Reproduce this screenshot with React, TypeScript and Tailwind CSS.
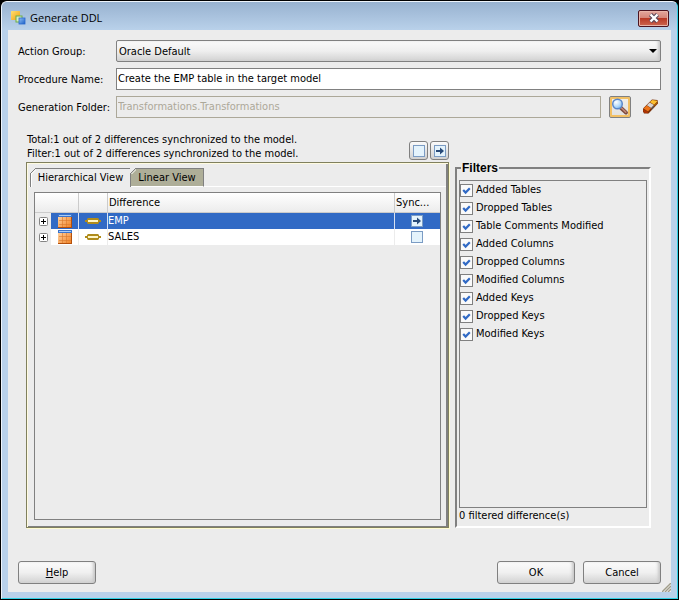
import { useState } from 'react';
import type { ReactNode } from 'react';

const FILTERS = [
  'Added Tables',
  'Dropped Tables',
  'Table Comments Modified',
  'Added Columns',
  'Dropped Columns',
  'Modified Columns',
  'Added Keys',
  'Dropped Keys',
  'Modified Keys',
];

type Difference = {
  name: string;
  synced: boolean;
};

const DIFFERENCES: Difference[] = [
  { name: 'EMP', synced: true },
  { name: 'SALES', synced: false },
];

function AppIcon() {
  return (
    <svg width="16" height="16" viewBox="0 0 16 16" aria-hidden="true">
      <defs>
        <linearGradient id="app-y" x1="0" y1="0" x2="1" y2="1">
          <stop offset="0" stopColor="#ffdf70" />
          <stop offset="1" stopColor="#f0a010" />
        </linearGradient>
        <linearGradient id="app-b" x1="0" y1="0" x2="1" y2="1">
          <stop offset="0" stopColor="#8fc0f8" />
          <stop offset="1" stopColor="#1c5fc4" />
        </linearGradient>
      </defs>
      <rect x="1" y="1" width="9" height="9" rx="0.5" fill="url(#app-y)" />
      <rect x="6" y="6" width="6" height="6" fill="#d8ecc0" stroke="#6cae48" />
      <rect x="9" y="8" width="6" height="6" fill="url(#app-b)" stroke="#2a6ad0" strokeWidth="0.8" />
    </svg>
  );
}

function SearchIcon() {
  return (
    <svg width="18" height="18" viewBox="0 0 18 18" aria-hidden="true">
      <defs>
        <radialGradient id="lens" cx="0.35" cy="0.3" r="0.8">
          <stop offset="0" stopColor="#ffffff" />
          <stop offset="0.5" stopColor="#bfe0fb" />
          <stop offset="1" stopColor="#6fb2ee" />
        </radialGradient>
      </defs>
      <path d="M10 10l5 4.6" stroke="#7c4a3c" strokeWidth="3.8" strokeLinecap="round" />
      <path d="M10.5 10l4.3 4.1" stroke="#c08878" strokeWidth="1.6" strokeLinecap="round" />
      <circle cx="6.5" cy="6" r="4.8" fill="url(#lens)" stroke="#5a86c8" strokeWidth="1.4" />
    </svg>
  );
}

function EraserIcon() {
  return (
    <svg width="18" height="18" viewBox="0 0 18 18" aria-hidden="true">
      <path d="M1 10.5L10 1.5L15.5 2L16 5.5L6.5 15.5L2 15.5L1 13.5Z" fill="#7a3008" />
      <path d="M1.6 10.6L4.6 7.5L9 10.2L6 13.4Z" fill="#ee7418" />
      <path d="M1.4 11.2L5.8 13.8L6 15.2L2.2 14.8L1.4 13.2Z" fill="#b03404" />
      <path d="M4.9 7.2L7.6 4.4L12 7L9.2 10Z" fill="#d8d4d0" />
      <path d="M9.2 10.2L12 7.2L12.2 9L9.4 12Z" fill="#5e5854" />
      <path d="M7.9 4.1L10.4 1.9L15 2.8L15.2 3.6L12.2 6.8Z" fill="#fcc030" />
      <path d="M12.3 7L15.3 3.8L15.4 5.5L12.4 8.7Z" fill="#a8600c" />
    </svg>
  );
}

function TableIcon() {
  return (
    <svg width="14" height="14" viewBox="0 0 14 14" aria-hidden="true" className="mx-auto block">
      <defs>
        <linearGradient id="cells" x1="0" y1="0" x2="1" y2="1">
          <stop offset="0" stopColor="#ffdcb0" />
          <stop offset="1" stopColor="#f07c1c" />
        </linearGradient>
      </defs>
      <rect width="14" height="14" fill="url(#cells)" />
      <rect width="14" height="3" fill="#3b74cc" />
      <path d="M1 1.5h12" stroke="#a8ccf6" />
      <path d="M4.5 3v10M8.5 3v10M1 6.5h12M1 10.5h12" stroke="#d8782c" strokeOpacity="0.6" />
      <path d="M0 13.5h14M13.5 3v11" stroke="#b4500c" />
    </svg>
  );
}

function ColumnIcon() {
  return (
    <svg width="16" height="6" viewBox="0 0 16 6" aria-hidden="true" className="mx-auto block">
      <path d="M0 3h16" stroke="#b08c1c" strokeWidth="2" />
      <path d="M3 0H13L14 1V5L13 6H3L2 5V1Z" fill="#b08c1c" />
      <path d="M3 2h10v2H3Z" fill="#fff6c8" />
    </svg>
  );
}

// Small blue-framed square, with an arrow in it when the row is synchronized
function SyncMark({ arrow }: { arrow: boolean }) {
  return (
    <svg width="12" height="12" viewBox="0 0 12 12" aria-hidden="true" className="mx-auto block">
      <rect x="0.5" y="0.5" width="11" height="11" fill="#e4f3fc" stroke="#7b9cc4" />
      {arrow && (
        <>
          <path d="M2 6h5" stroke="#284a78" strokeWidth="2" />
          <path d="M6 2.6L10 6L6 9.4Z" fill="#284a78" />
        </>
      )}
    </svg>
  );
}

function ExpandIcon() {
  return (
    <svg width="9" height="9" viewBox="0 0 9 9" aria-hidden="true" className="block">
      <rect x="0.5" y="0.5" width="8" height="8" rx="1" fill="#fff" stroke="#848484" />
      <path d="M2 4.5h5M4.5 2v5" stroke="#000" />
    </svg>
  );
}

function TabCorner() {
  return (
    <svg width="6" height="6" viewBox="0 0 6 6" aria-hidden="true" className="absolute -left-px -top-px">
      <path d="M0 0H6L0 6Z" fill="#ececec" />
      <path d="M1 6.5L6.5 1" stroke="#fff" />
      <path d="M0 6L6 0" stroke="#808080" />
    </svg>
  );
}

type PushButtonProps = {
  children: ReactNode;
};

function PushButton({ children }: PushButtonProps) {
  return (
    <button
      type="button"
      className="h-[23px] w-[78px] rounded-[3px] border border-[#808080] bg-linear-to-b from-[#fbfbfb] via-[#f0f0f0] to-[#d2d2d2] shadow-[inset_-3px_0_3px_-1px_#c8c8c8]"
    >
      {children}
    </button>
  );
}

function IconToggle({ label, arrow }: { label: string; arrow: boolean }) {
  return (
    <button
      type="button"
      aria-label={label}
      className="size-[19px] rounded-[3px] border border-[#808080] bg-linear-to-b from-[#fbfbfb] to-[#d0d0d0]"
    >
      <SyncMark arrow={arrow} />
    </button>
  );
}

function TitleBar() {
  return (
    <header className="flex h-[28px] shrink-0 items-center rounded-t-[5px] bg-linear-to-b from-[#98b2d0] to-[#b9d1ea] px-2 pt-[4px]">
      <AppIcon />
      <h1 className="ml-1 flex-1 font-['Open_Sans',sans-serif] text-[11px]">Generate DDL</h1>
      <button
        type="button"
        aria-label="Close"
        className="flex h-[17px] w-[31px] items-center justify-center rounded-[2px] border border-[#4c1420] bg-[linear-gradient(#e3a79d,#d6877a_45%,#b93a26_50%,#cc6650)] shadow-[inset_0_0_0_1px_#e8b4a8]"
      >
        <svg width="12" height="10" viewBox="0 0 12 10" aria-hidden="true">
          <path d="M2.5 1.5L9.5 8.5M9.5 1.5L2.5 8.5" stroke="#57485a" strokeWidth="4.4" />
          <path d="M2.5 1.5L9.5 8.5M9.5 1.5L2.5 8.5" stroke="#fff" strokeWidth="2.4" />
        </svg>
      </button>
    </header>
  );
}

function SettingsForm() {
  return (
    <div className="grid grid-cols-[98px_1fr] items-center gap-y-[6px] px-[10px]">
      <label htmlFor="action-group" className="pt-[2px]">
        Action Group:
      </label>
      <div className="relative">
        <select
          id="action-group"
          className="block h-[22px] w-full appearance-none rounded-[2px] border border-[#808080] bg-linear-to-b from-[#fafafa] via-[#efefef] to-[#d2d2d2] px-[2px] pt-px shadow-[inset_-3px_0_3px_-1px_#c8c8c8]"
        >
          <option>Oracle Default</option>
        </select>
        <svg
          width="8"
          height="4"
          viewBox="0 0 8 4"
          aria-hidden="true"
          className="pointer-events-none absolute right-1 top-[9px]"
        >
          <path d="M0 0H8L4 4Z" fill="#000" />
        </svg>
      </div>

      <label htmlFor="procedure-name" className="pt-[2px]">
        Procedure Name:
      </label>
      <input
        id="procedure-name"
        type="text"
        defaultValue="Create the EMP table in the target model"
        className="h-[22px] w-full border border-[#808080] bg-white px-px pb-[2px]"
      />

      <label htmlFor="generation-folder" className="pt-[2px]">
        Generation Folder:
      </label>
      <div className="flex items-center">
        <input
          id="generation-folder"
          type="text"
          disabled
          defaultValue="Transformations.Transformations"
          className="h-[22px] min-w-0 flex-1 border border-[#aca899] bg-[#ececec] px-px pb-[2px] text-[#aca899]"
        />
        <button
          type="button"
          aria-label="Browse"
          className="ml-2 flex size-[22px] items-center justify-center rounded-[2px] border border-[#808080] bg-linear-to-b from-[#f4f0e8] to-[#e0e0e0] shadow-[inset_0_0_0_2px_#f2c064]"
        >
          <SearchIcon />
        </button>
        <button type="button" aria-label="Clear" className="ml-[9px] flex size-[21px] items-center justify-center">
          <EraserIcon />
        </button>
      </div>
    </div>
  );
}

function DifferenceTable() {
  const [selected, setSelected] = useState('EMP');

  return (
    <table className="w-full table-fixed border-separate border-spacing-0">
      <colgroup>
        <col className="w-[16px]" />
        <col className="w-[28px]" />
        <col className="w-[29px]" />
        <col />
        <col className="w-[45px]" />
      </colgroup>
      <thead>
        <tr className="h-[20px] bg-linear-to-b from-white to-[#ebebeb] text-left">
          <th colSpan={2} className="border-r border-b border-[#cbcbcb] p-0" aria-label="Type" />
          <th className="border-r border-b border-[#cbcbcb] p-0" aria-label="Change" />
          <th className="border-r border-b border-[#cbcbcb] p-0 pl-px font-normal">Difference</th>
          <th className="border-b border-[#cbcbcb] p-0 pl-px font-normal">Sync...</th>
        </tr>
      </thead>
      <tbody>
        {DIFFERENCES.map(({ name, synced }) => {
          const active = name === selected;
          const cell = active
            ? 'border-r border-[#d8e2f2] bg-[#316ac5] p-0 text-white'
            : 'border-r border-[#ececec] bg-white p-0';
          return (
            <tr key={name} className="h-[16px] leading-[14px]" onClick={() => setSelected(name)}>
              <td className="p-0 pl-1">
                <button type="button" aria-label={`Expand ${name}`} className="block">
                  <ExpandIcon />
                </button>
              </td>
              <td className={cell}>
                <TableIcon />
              </td>
              <td className={cell}>
                <ColumnIcon />
              </td>
              <td className={cell}>{name}</td>
              <td className={active ? 'bg-[#316ac5] p-0 pr-[2px]' : 'bg-white p-0 pr-[2px]'}>
                <SyncMark arrow={synced} />
              </td>
            </tr>
          );
        })}
      </tbody>
    </table>
  );
}

function DifferencePanel() {
  return (
    <section className="flex min-w-0 flex-col">
      <div className="flex items-end justify-between">
        <div className="pb-px pl-px leading-[14px]">
          <p>Total:1 out of 2 differences synchronized to the model.</p>
          <p>Filter:1 out of 2 differences synchronized to the model.</p>
        </div>
        <div className="flex gap-[2px] pb-[2px]">
          <IconToggle label="Unselect all" arrow={false} />
          <IconToggle label="Synchronize all" arrow />
        </div>
      </div>

      <div className="flex flex-1 flex-col border border-[#80805e] pl-[2px] pt-[5px] shadow-[1px_1px_0_#fffbd0,inset_1px_1px_0_#fffbe0,inset_-2px_-1px_0_#808080]">
        <div role="tablist" className="flex">
          <span className="w-px border-b border-white" />
          <button
            type="button"
            role="tab"
            aria-selected="true"
            className="relative h-[19px] w-[101px] border-x border-t border-[#808080] shadow-[inset_1px_0_0_#fff]"
          >
            <TabCorner />
            Hierarchical View
          </button>
          <button
            type="button"
            role="tab"
            aria-selected="false"
            className="relative h-[19px] w-[73px] border-b border-r border-t border-b-white border-r-[#808080] border-t-[#808080] bg-[#aeae98]"
          >
            <TabCorner />
            Linear View
          </button>
          <span className="mr-[2px] flex-1 border-b border-white" />
        </div>
        <div className="mb-[7px] ml-[5px] mr-[7px] mt-[5px] flex-1 border border-[#808080]">
          <DifferenceTable />
        </div>
      </div>
    </section>
  );
}

function FilterPanel() {
  return (
    <fieldset className="relative mt-[34px] flex min-w-0 flex-col border-2 border-b-white border-l-[#808080] border-r-white border-t-[#808080] px-[2px] pt-[11px]">
      <legend className="absolute -top-[8px] left-1 bg-[#ececec] px-px font-['Liberation_Sans',sans-serif] text-[12px] font-bold leading-[14px]">
        Filters
      </legend>
      <div className="flex-1 border border-[#808080]">
        {FILTERS.map((name) => (
          <label key={name} className="flex h-[18px] items-center gap-[3px] whitespace-nowrap">
            <span className="relative size-[13px] shrink-0">
              <input
                type="checkbox"
                defaultChecked
                className="peer block size-[13px] appearance-none border border-[#808080] bg-[#fafafa]"
              />
              <svg
                width="13"
                height="13"
                viewBox="0 0 13 13"
                aria-hidden="true"
                className="pointer-events-none absolute inset-0 hidden peer-checked:block"
              >
                <path d="M3.2 6L5.6 8.6L9.8 4.2" fill="none" stroke="#316ac5" strokeWidth="2.2" />
              </svg>
            </span>
            {name}
          </label>
        ))}
      </div>
      <p className="h-[18px] leading-[16px]">0 filtered difference(s)</p>
    </fieldset>
  );
}

export default function App() {
  return (
    <div className="flex min-h-screen flex-col bg-black p-px font-['DejaVu_Sans_Condensed','DejaVu_Sans',sans-serif] text-[11px] leading-[14px] text-black">
      <div className="flex flex-1 flex-col rounded-t-[6px] border border-b-[#2fd0e4] border-l-[#eef4fb] border-r-[#2fd0e4] border-t-[#eef4fb] bg-[#b9d1ea]">
        <TitleBar />
        <main className="relative mx-[6px] mb-[6px] flex flex-1 flex-col bg-[#ececec] pt-[10px]">
          <SettingsForm />

          <div className="mt-[15px] grid flex-1 grid-cols-[1fr_196px] gap-[6px] pl-[18px] pr-5">
            <DifferencePanel />
            <FilterPanel />
          </div>

          <footer className="mb-2 mt-[33px] flex gap-2 px-[10px]">
            <div className="flex-1">
              <PushButton>
                <span className="underline">H</span>elp
              </PushButton>
            </div>
            <PushButton>OK</PushButton>
            <PushButton>Cancel</PushButton>
          </footer>

          <svg
            width="9"
            height="9"
            viewBox="0 0 9 9"
            aria-hidden="true"
            className="absolute bottom-0 right-0"
          >
            <path d="M0 9L9 0M3 9L9 3M6 9L9 6" stroke="#a09c88" strokeWidth="1.4" />
          </svg>
        </main>
      </div>
    </div>
  );
}
